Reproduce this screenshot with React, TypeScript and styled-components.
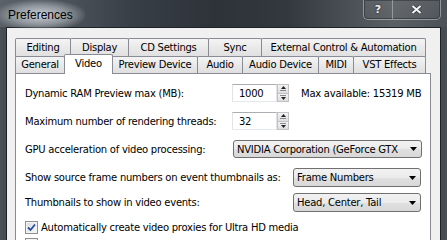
import * as React from 'react';
import styled, { createGlobalStyle } from 'styled-components';

const GlobalStyle = createGlobalStyle`
  html, body {
    margin: 0;
    padding: 0;
    overflow: hidden;
    background: #3d4248;
  }
`

const Window = styled.div`
  width: 447px;
  height: 240px;
  display: flex;
  flex-direction: column;
  background: linear-gradient(90deg, #4a5056 0%, #3c4147 4%, #353a40 50%, #3a3f45 96%, #4a4f55 100%);
  overflow: hidden;
`

const TitleBar = styled.div`
  height: 27px;
  flex: none;
  display: flex;
  align-items: flex-start;
  background: linear-gradient(90deg, #5a6168 0%, #4d545b 14%, #383e45 30%, #2d3339 48%, #32383e 64%, #4b5056 78%, #5b6065 88%, #4c5157 100%);
`

const Title = styled.div`
  position: relative;
  margin: 8px 0 0 8px;
  font-family: "Liberation Sans", Arial, sans-serif;
  font-size: 12px;
  line-height: 14px;
  color: #000;

  &::before {
    content: '';
    position: absolute;
    left: -12px;
    right: -12px;
    top: -8px;
    bottom: -8px;
    background: radial-gradient(ellipse at center, rgba(225, 230, 235, 0.85) 0%, rgba(190, 196, 202, 0.55) 45%, rgba(150, 156, 162, 0) 75%);
  }

  & > span {
    position: relative;
  }
`

const Spacer = styled.div`
  flex: 1;
`

const CaptionGroup = styled.div`
  display: flex;
  height: 19px;
  margin-right: 6px;
  border: 1px solid rgba(200, 205, 210, 0.55);
  border-top: none;
  border-radius: 0 0 5px 5px;
  box-shadow: inset 0 0 0 1px rgba(20, 24, 28, 0.45);
  overflow: hidden;
`

const CaptionButton = styled.div<{ $w: number; $sep?: boolean }>`
  width: ${p => p.$w}px;
  display: flex;
  align-items: center;
  justify-content: center;
  border-left: ${p => (p.$sep ? '1px solid rgba(200, 205, 210, 0.5)' : 'none')};
  background: linear-gradient(rgba(255, 255, 255, 0.06), rgba(255, 255, 255, 0.02));
  color: #eef0f2;
  font-family: "DejaVu Sans", sans-serif;
  font-weight: bold;
  font-size: 11px;
  text-shadow: 0 0 2px rgba(0, 0, 0, 0.9);
`

const Client = styled.div`
  flex: 1;
  margin: 0 6px 0 6px;
  border: 1px solid #1e2226;
  border-bottom: none;
  background: #f0f0f0;
  padding: 10px 8px 0 8px;
  display: flex;
  flex-direction: column;
  font-family: "DejaVu Sans", Verdana, sans-serif;
  font-size: 10px;
  letter-spacing: -0.25px;
  color: #000;
`

const TabRow = styled.div<{ $overlap?: boolean }>`
  display: flex;
  align-items: flex-end;
  height: ${p => (p.$overlap ? 17 : 19)}px;
  margin-top: ${p => (p.$overlap ? -1 : 0)}px;
  position: relative;
`

const Tab = styled.div<{ $w: number; $active?: boolean }>`
  width: ${p => p.$w}px;
  height: ${p => (p.$active ? '20px' : '100%')};
  box-sizing: border-box;
  margin-bottom: ${p => (p.$active ? -1 : 0)}px;
  position: relative;
  z-index: ${p => (p.$active ? 2 : 1)};
  display: flex;
  align-items: center;
  justify-content: center;
  padding-bottom: ${p => (p.$active ? 3 : 1)}px;
  border: 1px solid #898c95;
  border-bottom: none;
  margin-left: -1px;
  border-radius: 2px 2px 0 0;
  background: ${p => (p.$active ? '#fff' : 'linear-gradient(#f4f4f4 0%, #eaeaea 45%, #dfdfdf 100%)')};
  white-space: nowrap;

  &:first-child {
    margin-left: 0;
  }
`

const Panel = styled.div`
  flex: 1;
  width: 416px;
  box-sizing: border-box;
  background: #fff;
  border: 1px solid #898c95;
  border-bottom: none;
  padding: 10px 0 0 9px;
  display: flex;
  flex-direction: column;
`

const Row = styled.div<{ $h: number; $mt: number }>`
  display: flex;
  align-items: center;
  height: ${p => p.$h}px;
  margin-top: ${p => p.$mt}px;
  flex: none;
`

const Label = styled.div<{ $w: number }>`
  width: ${p => p.$w}px;
  flex: none;
  white-space: nowrap;
`

const SpinBox = styled.div`
  display: flex;
  height: 18px;
`

const SpinInput = styled.div`
  width: 45px;
  box-sizing: border-box;
  border: 1px solid;
  border-color: #abadb3 #e2e3ea #e3e9ef #e2e3ea;
  padding-left: 6px;
  display: flex;
  align-items: center;
  background: #fff;
`

const SpinButtons = styled.div`
  width: 12px;
  display: flex;
  flex-direction: column;
`

const SpinHalf = styled.div<{ $down?: boolean }>`
  flex: 1;
  box-sizing: border-box;
  border: 1px solid #c2c2c2;
  border-top-width: ${p => (p.$down ? 0 : 1)}px;
  background: linear-gradient(#f3f3f3, #dedede);
  display: flex;
  flex-direction: ${p => (p.$down ? 'column-reverse' : 'column')};
  align-items: center;
  justify-content: center;
  gap: 1px;
`

const Grip = styled.div`
  width: 6px;
  height: 1px;
  background: #8a8a8a;
`

const Note = styled.div`
  margin-left: 12px;
  white-space: nowrap;
`

const Select = styled.div<{ $w: number }>`
  width: ${p => p.$w}px;
  height: 100%;
  box-sizing: border-box;
  border: 1px solid #707070;
  border-radius: 3px;
  background: linear-gradient(#f2f2f2 0%, #ebebeb 50%, #e0e0e0 51%, #d8d8d8 100%);
  display: flex;
  align-items: center;
  padding: 0 4px 0 3px;
  gap: 8px;
`

const SelectText = styled.div`
  flex: 1;
  overflow: hidden;
  white-space: nowrap;
`

const Check = styled.div`
  width: 13px;
  height: 13px;
  box-sizing: border-box;
  border: 1px solid #8e8f8f;
  background: linear-gradient(135deg, #d9dde3 0%, #f6f7f9 100%);
  box-shadow: inset 0 0 0 1px #f4f4f4;
  display: flex;
  align-items: center;
  justify-content: center;
  flex: none;
`

const CheckLabel = styled.div`
  margin-left: 3px;
  white-space: nowrap;
`

const UpArrow = () => (
  <svg width="5" height="3" viewBox="0 0 5 3"><path d="M2.5 0 L5 3 L0 3 Z" fill="#222" /></svg>
)

const DownArrow = () => (
  <svg width="5" height="3" viewBox="0 0 5 3"><path d="M0 0 L5 0 L2.5 3 Z" fill="#222" /></svg>
)

const ComboArrow = () => (
  <svg width="7" height="4" viewBox="0 0 7 4"><path d="M0 0 L7 0 L3.5 4 Z" fill="#000" /></svg>
)

const CloseGlyph = () => (
  <svg width="11" height="9" viewBox="0 0 11 9">
    <path d="M1.5 1 L9.5 8 M9.5 1 L1.5 8" stroke="#000" strokeOpacity="0.5" strokeWidth="3.4" />
    <path d="M1.5 1 L9.5 8 M9.5 1 L1.5 8" stroke="#f0f2f4" strokeWidth="2.2" />
  </svg>
)

const CheckMark = () => (
  <svg width="9" height="9" viewBox="0 0 9 9"><path d="M1 4.5 L3.5 7 L8 1.5" stroke="#2a4a9a" strokeWidth="1.8" fill="none" /></svg>
)

const Spin = (props: { value: string }) =>
  <SpinBox>
    <SpinInput>{props.value}</SpinInput>
    <SpinButtons>
      <SpinHalf><UpArrow /><Grip /></SpinHalf>
      <SpinHalf $down><DownArrow /><Grip /></SpinHalf>
    </SpinButtons>
  </SpinBox>

const Combo = (props: { w: number; text: string }) =>
  <Select $w={props.w}>
    <SelectText>{props.text}</SelectText>
    <ComboArrow />
  </Select>

const backTabs: [string, number][] = [
  ['Editing', 56], ['Display', 59], ['CD Settings', 81], ['Sync', 54], ['External Control & Automation', 165],
]

const frontTabs: [string, number][] = [
  ['General', 50], ['Video', 49], ['Preview Device', 86], ['Audio', 46], ['Audio Device', 77], ['MIDI', 36], ['VST Effects', 73],
]

export default function App() {
  return (
    <>
      <GlobalStyle />
      <Window>
        <TitleBar>
          <Title><span>Preferences</span></Title>
          <Spacer />
          <CaptionGroup>
            <CaptionButton $w={28}>?</CaptionButton>
            <CaptionButton $w={47} $sep><CloseGlyph /></CaptionButton>
          </CaptionGroup>
        </TitleBar>
        <Client>
          <TabRow>
            {backTabs.map(([t, w]) => <Tab key={t} $w={w}>{t}</Tab>)}
          </TabRow>
          <TabRow $overlap>
            {frontTabs.map(([t, w]) => <Tab key={t} $w={w} $active={t === 'Video'}>{t}</Tab>)}
          </TabRow>
          <Panel>
            <Row $h={18} $mt={0}>
              <Label $w={207}>Dynamic RAM Preview max (MB):</Label>
              <Spin value="1000" />
              <Note>Max available: 15319 MB</Note>
            </Row>
            <Row $h={18} $mt={10}>
              <Label $w={207}>Maximum number of rendering threads:</Label>
              <Spin value="32" />
            </Row>
            <Row $h={18} $mt={10}>
              <Label $w={208}>GPU acceleration of video processing:</Label>
              <Combo w={189} text="NVIDIA Corporation (GeForce GTX" />
            </Row>
            <Row $h={19} $mt={10}>
              <Label $w={268}>Show source frame numbers on event thumbnails as:</Label>
              <Combo w={128} text="Frame Numbers" />
            </Row>
            <Row $h={19} $mt={6}>
              <Label $w={268}>Thumbnails to show in video events:</Label>
              <Combo w={128} text="Head, Center, Tail" />
            </Row>
            <Row $h={13} $mt={9}>
              <Check><CheckMark /></Check>
              <CheckLabel>Automatically create video proxies for Ultra HD media</CheckLabel>
            </Row>
            <Row $h={13} $mt={4}>
              <Check />
            </Row>
          </Panel>
        </Client>
      </Window>
    </>
  )
}
